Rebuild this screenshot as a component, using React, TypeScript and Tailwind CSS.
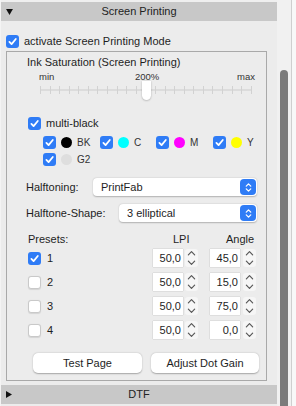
import React from "react";

const font = { fontFamily: '"Liberation Sans", Arial, sans-serif' };

function Check({ checked }: { checked?: boolean }) {
  if (!checked) {
    return <span className="block h-[13px] w-[13px] shrink-0 rounded-[3px] border border-[#c9c9c9] bg-white shadow-[0_0.5px_1px_rgba(0,0,0,0.1)]" />;
  }
  return (
    <span className="flex h-[13px] w-[13px] shrink-0 items-center justify-center rounded-[3px] bg-[#2f7cf6]">
      <svg viewBox="0 0 12 12" className="h-[11px] w-[11px]">
        <path d="M2.6 6.4 L5 8.9 L9.6 3.2" stroke="white" strokeWidth="1.9" fill="none" strokeLinecap="round" strokeLinejoin="round" />
      </svg>
    </span>
  );
}

function Ink({ label, color, left }: { label: string; color: string; left: string }) {
  return (
    <div className={`absolute top-0 flex items-center ${left}`}>
      <Check checked />
      <span className="ml-[5px] h-[11px] w-[11px] rounded-full" style={{ background: color }} />
      <span className="ml-[5px] text-[10px] text-[#333]">{label}</span>
    </div>
  );
}

function SelectBox({ value, className }: { value: string; className: string }) {
  return (
    <div className={`flex h-[18px] items-center justify-between rounded-[4px] bg-white pl-[8px] pr-[1px] shadow-[0_0.5px_1.5px_rgba(0,0,0,0.25)] ${className}`}>
      <span className="text-[11px] text-[#1e1e1e]">{value}</span>
      <span className="flex h-[16px] w-[16px] items-center justify-center rounded-[4px] bg-[#2f7cf6]">
        <svg viewBox="0 0 10 12" className="h-[11px] w-[9px]">
          <path d="M2.5 4.5 L5 2 L7.5 4.5 M2.5 7.5 L5 10 L7.5 7.5" stroke="white" strokeWidth="1.4" fill="none" strokeLinecap="round" strokeLinejoin="round" />
        </svg>
      </span>
    </div>
  );
}

function Stepper() {
  return (
    <span className="flex h-[18px] w-[13px] flex-col items-center justify-between rounded-[3px] bg-[#f6f6f6] py-[1px]">
      <svg viewBox="0 0 10 6" className="h-[6px] w-[9px]">
        <path d="M1.5 5 L5 1.5 L8.5 5" stroke="#555" strokeWidth="1.3" fill="none" strokeLinecap="round" strokeLinejoin="round" />
      </svg>
      <svg viewBox="0 0 10 6" className="h-[6px] w-[9px]">
        <path d="M1.5 1 L5 4.5 L8.5 1" stroke="#555" strokeWidth="1.3" fill="none" strokeLinecap="round" strokeLinejoin="round" />
      </svg>
    </span>
  );
}

function Field({ value }: { value: string }) {
  return (
    <span className="flex h-[18px] w-[30px] items-center justify-end bg-white pr-[2px] text-[11px] text-[#1e1e1e] shadow-[0_0_1px_rgba(0,0,0,0.35)]">
      {value}
    </span>
  );
}

const presets = [
  { n: "1", lpi: "50,0", angle: "45,0", on: true },
  { n: "2", lpi: "50,0", angle: "15,0", on: false },
  { n: "3", lpi: "50,0", angle: "75,0", on: false },
  { n: "4", lpi: "50,0", angle: "0,0", on: false },
];

export default function App() {
  const ticks = Array.from({ length: 23 }, (_, i) => i);
  return (
    <div className="flex h-[406px] w-[296px] overflow-hidden bg-[#ececec] text-[#1e1e1e]" style={font}>
      <div className="flex w-[277px] flex-col border-l border-[#f4f4f4]">
        <div className="h-[2px] bg-[#efefef]" />
        {/* Screen Printing header */}
        <div className="relative flex h-[19px] items-center justify-center bg-[#c8c8c8]">
          <svg viewBox="0 0 8 7" className="absolute left-[5px] top-[7px] h-[6px] w-[7px]">
            <path d="M0 0 H8 L4 7 Z" fill="#111" />
          </svg>
          <span className="text-[11px] text-[#222]">Screen Printing</span>
        </div>

        <div className="mt-[14px] flex h-[13px] items-center pl-[5px]">
          <Check checked />
          <span className="ml-[5px] text-[11px]">activate Screen Printing Mode</span>
        </div>

        {/* group box */}
        <div className="ml-[5px] mt-[3px] flex w-[261px] flex-col border border-[#a9a9a9] pb-[7px]">
          <div className="flex h-[20px] items-center pl-[20px] text-[11px]">Ink Saturation (Screen Printing)</div>
          <div className="relative h-[14px] text-[9.5px] text-[#333]">
            <span className="absolute left-[32px] top-[-2px]">min</span>
            <span className="absolute left-[128px] top-[-2px]">200%</span>
            <span className="absolute left-[230px] top-[-2px]">max</span>
          </div>
          <div className="relative ml-[33px] h-[14px] w-[212px]">
            <div className="absolute left-0 right-0 top-[3px] h-[2px] rounded-full bg-[#dcdcdc]" />
            <div className="absolute left-0 right-0 top-0 flex justify-between">
              {ticks.map((t) => (
                <span key={t} className="h-[8px] w-[1px] bg-[#d2d2d2]" />
              ))}
            </div>
            <div className="absolute left-[102px] top-[-5px] h-[19px] w-[9px] rounded-b-full rounded-t-[3px] bg-white shadow-[0_0.5px_2px_rgba(0,0,0,0.3)]" />
          </div>

          <div className="ml-[21px] mt-[16px] flex h-[15px] items-center">
            <Check checked />
            <span className="ml-[5px] text-[11px]">multi-black</span>
          </div>
          <div className="relative mt-[3px] h-[15px]">
            <div className="absolute top-[1px] w-full">
              <Ink label="BK" color="#000" left="left-[36px]" />
              <Ink label="C" color="#00ffff" left="left-[93px]" />
              <Ink label="M" color="#ff00ff" left="left-[149px]" />
              <Ink label="Y" color="#ffff00" left="left-[206px]" />
            </div>
          </div>
          <div className="relative mt-[2px] h-[15px]">
            <div className="absolute top-[1px] w-full">
              <Ink label="G2" color="#dedede" left="left-[36px]" />
            </div>
          </div>

          <div className="mt-[12px] flex items-center">
            <span className="w-[86px] pl-[19px] text-[11px]">Halftoning:</span>
            <SelectBox value="PrintFab" className="w-[164px]" />
          </div>
          <div className="mt-[8px] flex items-center">
            <span className="w-[112px] pl-[19px] text-[11px]">Halftone-Shape:</span>
            <SelectBox value="3 elliptical" className="w-[138px]" />
          </div>

          <div className="relative mt-[9px] h-[14px] text-[11px]">
            <span className="absolute left-[21px] top-0">Presets:</span>
            <span className="absolute left-[166px] top-0">LPI</span>
            <span className="absolute left-[219px] top-0">Angle</span>
          </div>
          <div className="mt-[4px] flex flex-col gap-[6px]">
            {presets.map((p) => (
              <div key={p.n} className="flex h-[18px] items-center">
                <span className="ml-[21px]">
                  <Check checked={p.on} />
                </span>
                <span className="ml-[6px] w-[106px] text-[11px]">{p.n}</span>
                <Field value={p.lpi} />
                <span className="ml-[2px]">
                  <Stepper />
                </span>
                <span className="ml-[12px]">
                  <Field value={p.angle} />
                </span>
                <span className="ml-[3px]">
                  <Stepper />
                </span>
              </div>
            ))}
          </div>

          <div className="mt-[14px] flex h-[20px] gap-[9px] pl-[26px]">
            <button className="w-[109px] rounded-[5px] bg-white text-[11px] shadow-[0_0.5px_1.5px_rgba(0,0,0,0.3)]">Test Page</button>
            <button className="w-[108px] rounded-[5px] bg-white text-[11px] shadow-[0_0.5px_1.5px_rgba(0,0,0,0.3)]">Adjust Dot Gain</button>
          </div>
        </div>

        {/* DTF header */}
        <div className="relative mt-[4px] flex h-[19px] items-center justify-center bg-[#c8c8c8]">
          <svg viewBox="0 0 7 8" className="absolute left-[5px] top-[6px] h-[7px] w-[6px]">
            <path d="M0 0 L7 4 L0 8 Z" fill="#111" />
          </svg>
          <span className="text-[11px] text-[#222]">DTF</span>
        </div>
      </div>

      {/* scrollbar */}
      <div className="flex w-[19px] bg-[#f1f1f1]">
        <div className="ml-[3px] mt-[70px] w-[8px] rounded-t-full bg-[#7b7b7b]" />
        <div className="ml-[3px] w-[1px] bg-[#cfcfcf]" />
        <div className="flex-1 bg-[#f8f8f8]" />
      </div>
    </div>
  );
}
